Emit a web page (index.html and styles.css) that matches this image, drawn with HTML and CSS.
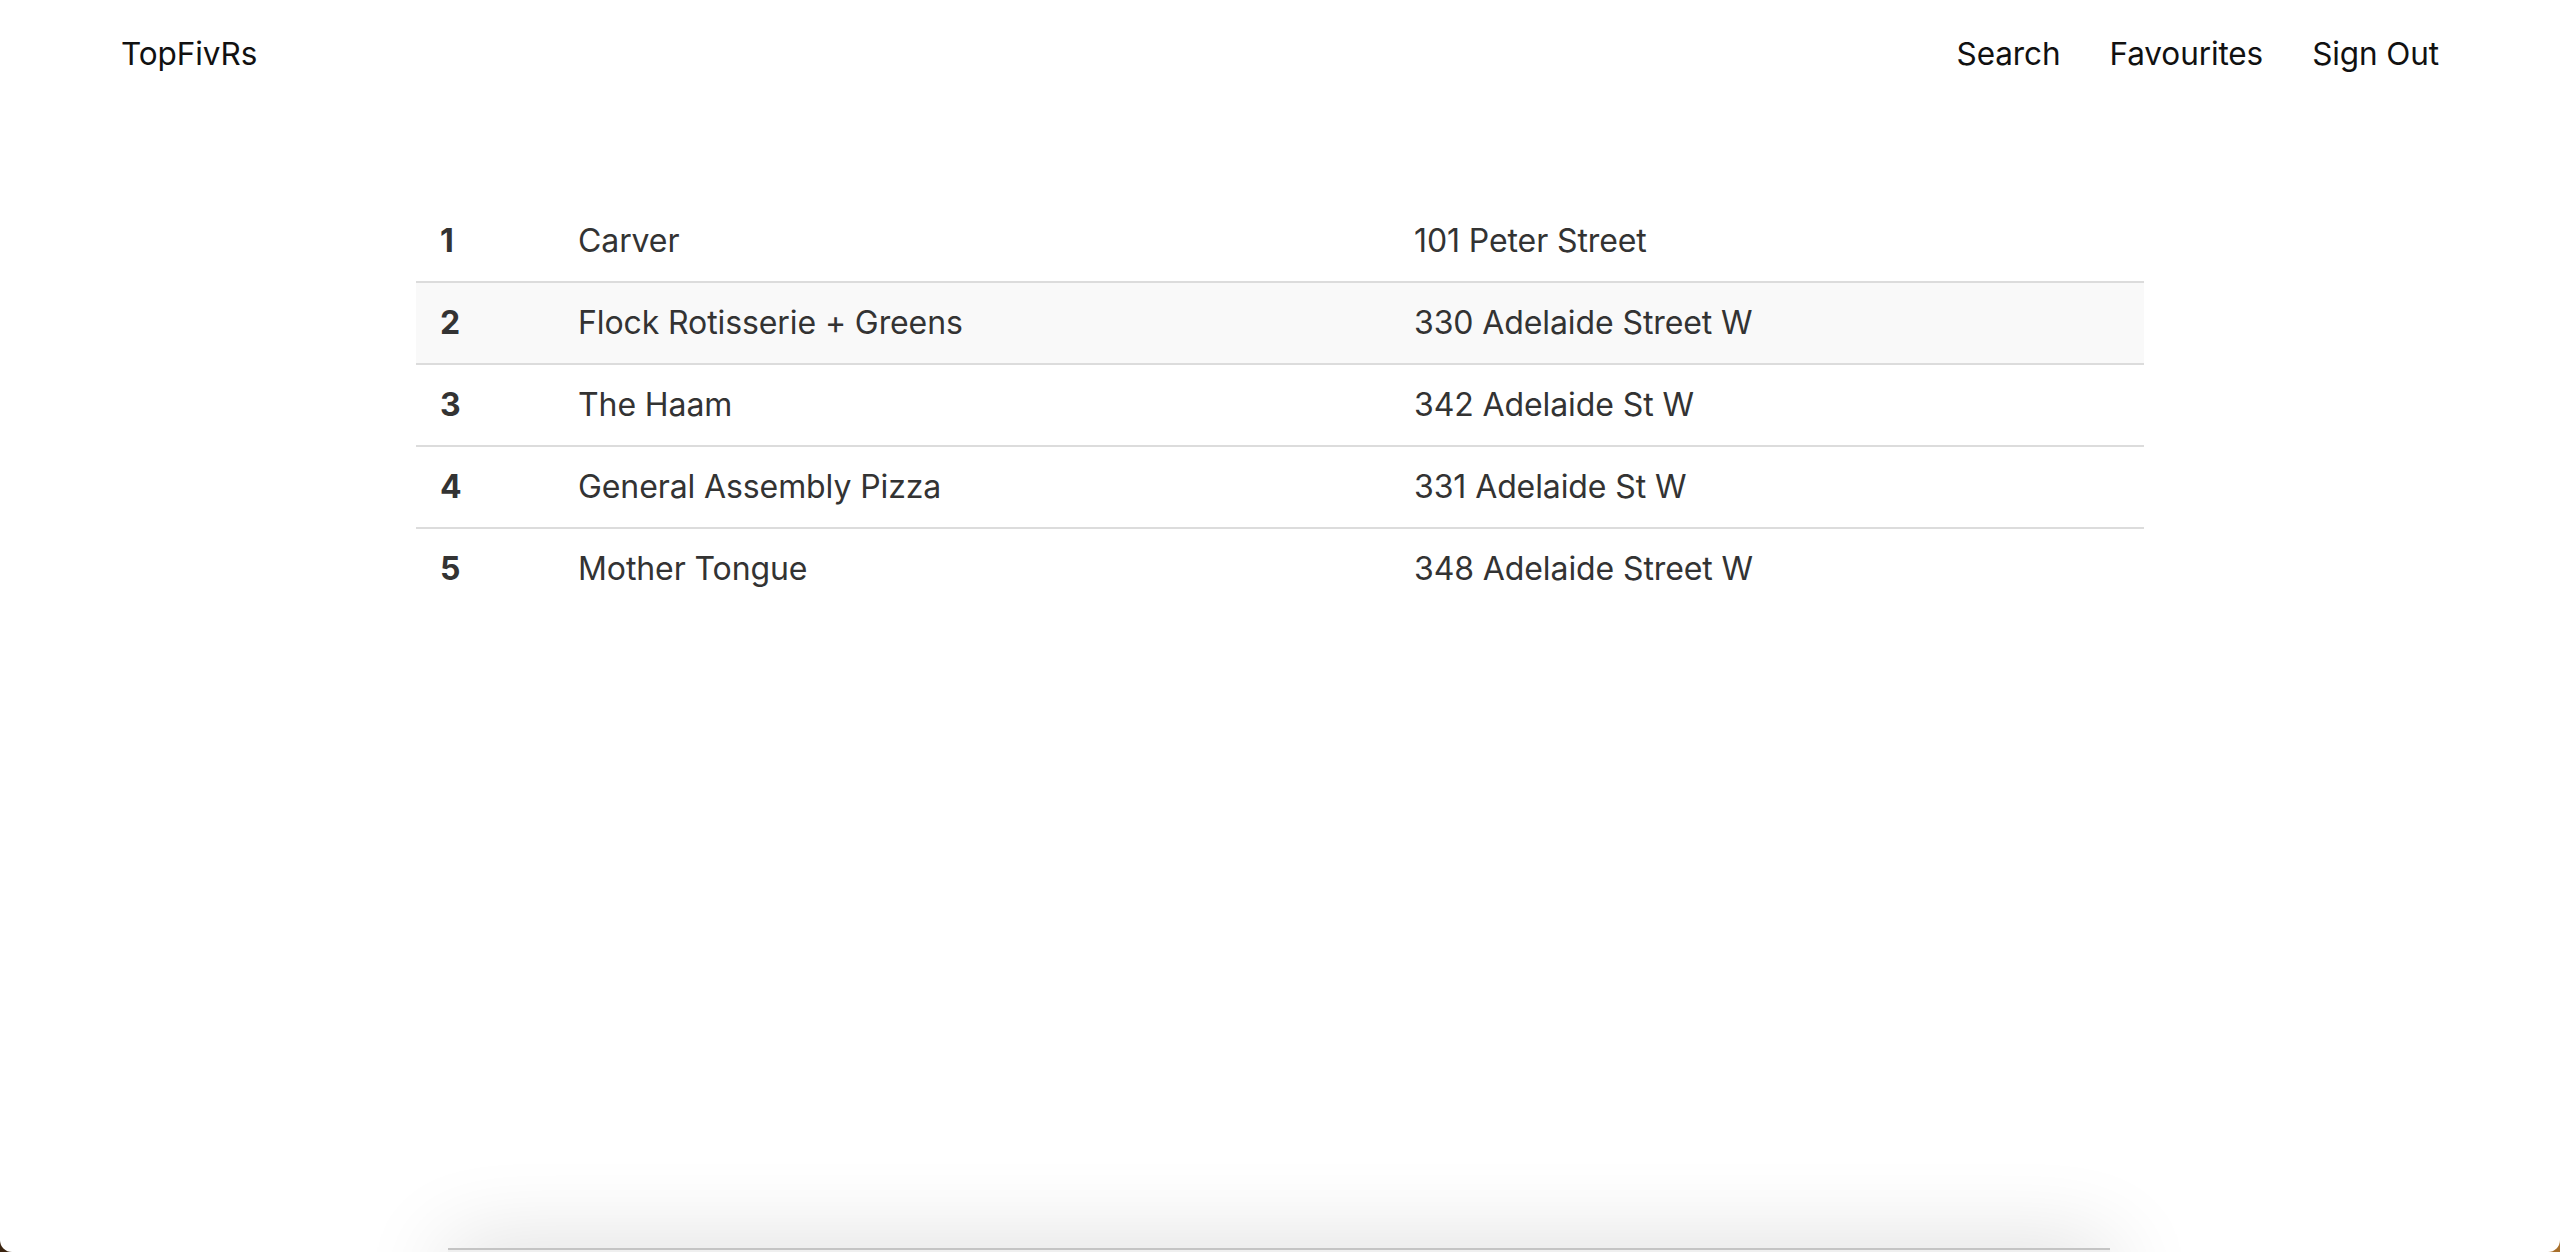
FILE: index.html
```html
<!DOCTYPE html>
<html lang="en">
<head>
<meta charset="utf-8">
<title>TopFivRs</title>
<link rel="stylesheet" href="styles.css">
</head>
<body>
<div class="window">
  <header class="navbar">
    <a class="brand" href="#">TopFivRs</a>
    <nav class="nav-links">
      <a href="#">Search</a>
      <a href="#">Favourites</a>
      <a href="#">Sign Out</a>
    </nav>
  </header>
  <main class="content">
    <table class="results">
      <colgroup>
        <col class="col-rank">
        <col class="col-name">
        <col class="col-addr">
      </colgroup>
      <tbody>
        <tr><th>1</th><td>Carver</td><td>101 Peter Street</td></tr>
        <tr class="striped"><th>2</th><td>Flock Rotisserie + Greens</td><td>330 Adelaide Street W</td></tr>
        <tr><th>3</th><td>The Haam</td><td>342 Adelaide St W</td></tr>
        <tr><th>4</th><td>General Assembly Pizza</td><td>331 Adelaide St W</td></tr>
        <tr><th>5</th><td>Mother Tongue</td><td>348 Adelaide Street W</td></tr>
      </tbody>
    </table>
  </main>
  <div class="bottom-sheet"></div>
</div>
</body>
</html>
```

FILE: styles.css
```css
html, body {
  margin: 0;
  padding: 0;
  height: 100%;
}

body {
  background: linear-gradient(90deg, #3b2410 0%, #6a4520 50%, #a8702c 100%);
  font-family: Inter, "Noto Sans", "Liberation Sans", sans-serif;
  overflow: hidden;
}

.window {
  position: relative;
  height: 100%;
  background: #ffffff;
  border-radius: 0 0 12px 12px;
  overflow: hidden;
}

.navbar {
  display: flex;
  align-items: center;
  justify-content: space-between;
  height: 106px;
  padding: 0 121px 0 121px;
  box-sizing: border-box;
}

.brand {
  color: #111;
  text-decoration: none;
  font-size: 31.5px;
  letter-spacing: -0.1px;
}

.nav-links {
  display: flex;
  gap: 49px;
}

.nav-links a {
  color: #111;
  text-decoration: none;
  font-size: 31.5px;
  letter-spacing: -0.1px;
}

.content {
  padding-top: 95px;
  display: flex;
  justify-content: center;
}

.results {
  width: 1728px;
  border-collapse: collapse;
  color: #333;
  font-size: 32px;
  line-height: 48px;
}

.col-rank { width: 138px; }
.col-name { width: 836px; }

.results th,
.results td {
  padding: 16px 24px;
  text-align: left;
  border-top: 2px solid #dcdcdc;
  letter-spacing: -0.1px;
}

.results th {
  font-weight: 700;
}

.results td {
  font-weight: 400;
}

.results tr:first-child th,
.results tr:first-child td {
  border-top: none;
}

.results tr.striped {
  background: #f9f9f9;
}

.bottom-sheet {
  position: absolute;
  left: 448px;
  right: 450px;
  bottom: -60px;
  height: 62px;
  background: #efefef;
  border-top: 2px solid #c4c4c4;
  box-shadow: 0 0 90px rgba(0, 0, 0, 0.16);
}
```
